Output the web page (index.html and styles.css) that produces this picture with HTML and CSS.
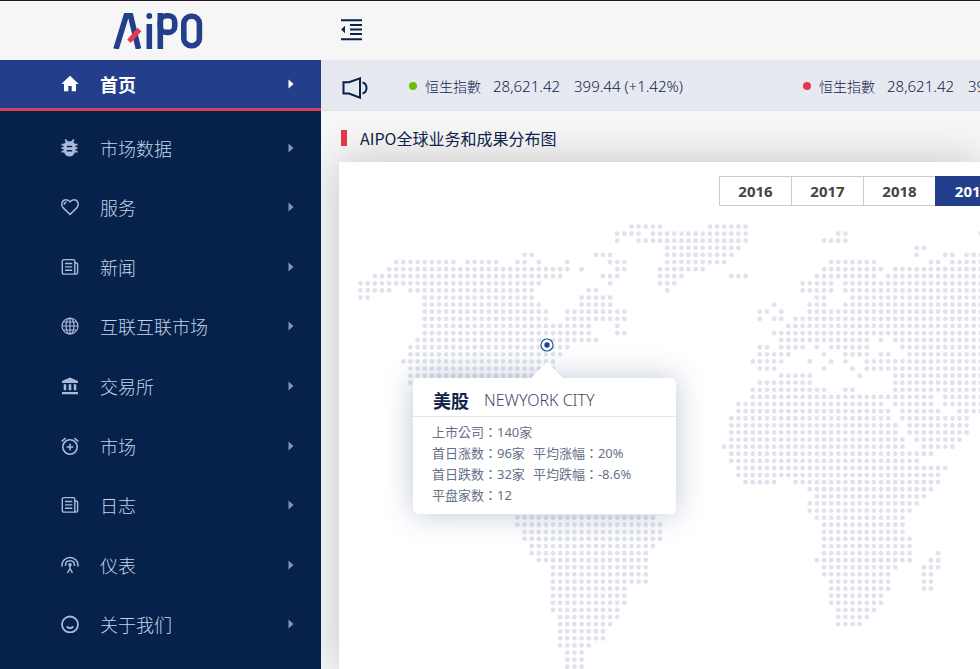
FILE: index.html
```html
<!DOCTYPE html>
<html lang="zh-CN">
<head>
<meta charset="utf-8">
<title>AIPO</title>
<link rel="stylesheet" href="styles.css">
</head>
<body>
<svg class="sprite" aria-hidden="true">
  <symbol id="news" viewBox="0 0 18 18">
    <path d="M3 1.600h9.400q1.400 0 1.400 1.400v11.600q0 1.500 1.300 1.500H3q-1.700 0-1.700-1.700V3q0-1.400 1.700-1.400zM13.800 5h1.200q1.600 0 1.600 1.500v8.200q0 1.400-1.500 1.400M4 5.500h7.300M4 8.900h7.300M4 12.300h7.300" fill="none" stroke="currentColor" stroke-width="1.400"/>
  </symbol>
  <symbol id="caret" viewBox="0 0 6 10"><path d="M.5.5 5.500 5 .5 9.500z" fill="currentColor"/></symbol>
</svg>
<div class="shell">
  <header class="topbar">
    <a class="brand" href="#" aria-label="AIPO">
      <svg class="logo" viewBox="0 0 90 36">
        <g fill="none" stroke="#233f8c" stroke-width="5.600">
          <polyline points="3,36 13.200,2.800 17.600,2.800 25.500,36"/>
          <line x1="36.300" y1="11" x2="36.300" y2="36"/>
          <line x1="47.300" y1="0" x2="47.300" y2="36"/>
          <rect x="47.300" y="2.800" width="14.400" height="16.600" rx="6"/>
          <rect x="70.800" y="3.300" width="15.600" height="29.400" rx="7.200"/>
        </g>
        <circle cx="36.300" cy="3" r="2.900" fill="#233f8c"/>
        <line x1="16" y1="28.300" x2="26.500" y2="16.500" stroke="#e23b4b" stroke-width="5"/>
      </svg>
    </a>
    <button class="toggle" type="button" aria-label="收起菜单">
      <svg viewBox="0 0 22 22"><path d="M0 1.200h21M9 6h12M9 10.500h12M9 15h12M0 20.300h21" stroke="currentColor" stroke-width="1.900"/><path d="M4 6.800v7.400L.2 10.500z" fill="currentColor"/></svg>
    </button>
  </header>
  <div class="body">
    <nav class="sidebar">
      <a class="item active" href="#"><svg class="icon" viewBox="0 0 18 18"><path d="M9 .7 17.700 9H15v7.300h-4.300v-5.200H7.300v5.200H3V9H.3z" fill="currentColor"/></svg><span class="name">首页</span><svg class="caret"><use href="#caret"/></svg></a>
      <div class="menu">
        <a class="item" href="#"><svg class="icon" viewBox="0 0 18 18"><path d="M3.500.8 5 0l1.500 2.300h4L12 0l1.500.8-1.300 2.400 1.800 1.600H16.500v1.700H14.500V8.200H16.500V10H14.500v1.700H16.500v1.800H13.800Q12.500 17.400 8.500 17.400T3.200 13.500H.5v-1.800H2.500V10H.5V8.200H2.500V6.500H.5V4.800H3l1.800-1.600zM5.800 6.700v1.500h5.400V6.700zM5.800 11v1.500h5.400V11z" fill="currentColor" fill-rule="evenodd"/></svg><span class="name">市场数据</span><svg class="caret"><use href="#caret"/></svg></a>
        <a class="item" href="#"><svg class="icon" viewBox="0 0 18 18"><path d="M9 16.500 2 9.600C-.5 6.500 1.300 1.700 5 1.700c1.800 0 3 .8 4 2.200 1-1.400 2.200-2.200 4-2.200 3.700 0 5.500 4.800 3 7.900zM3.200 6.800Q3.300 4.300 5.500 4.200" fill="none" stroke="currentColor" stroke-width="1.500" stroke-linejoin="round"/></svg><span class="name">服务</span><svg class="caret"><use href="#caret"/></svg></a>
        <a class="item" href="#"><svg class="icon"><use href="#news"/></svg><span class="name">新闻</span><svg class="caret"><use href="#caret"/></svg></a>
        <a class="item" href="#"><svg class="icon" viewBox="0 0 18 18"><g fill="none" stroke="currentColor" stroke-width="1.200"><circle cx="9" cy="9" r="8"/><ellipse cx="9" cy="9" rx="4" ry="8"/><path d="M9 1v16M1 9h16M2.200 5h13.600M2.200 13h13.600"/></g></svg><span class="name">互联互联市场</span><svg class="caret"><use href="#caret"/></svg></a>
        <a class="item" href="#"><svg class="icon" viewBox="0 0 18 18"><path d="M9 .5 17 4v2H1V4zM2.700 7.300h2.500v6H2.700zM7.700 7.300h2.600v6H7.700zM12.800 7.300h2.500v6h-2.500zM1 15h16v2.200H1z" fill="currentColor"/></svg><span class="name">交易所</span><svg class="caret"><use href="#caret"/></svg></a>
        <a class="item" href="#"><svg class="icon" viewBox="0 0 18 18"><g fill="none" stroke="currentColor" stroke-width="1.600"><circle cx="9" cy="10" r="7.200"/><path d="M9 6.700v6.600M5.700 10h6.600M.7 4.400 4.700 1M17.300 4.400 13.300 1"/></g></svg><span class="name">市场</span><svg class="caret"><use href="#caret"/></svg></a>
        <a class="item" href="#"><svg class="icon"><use href="#news"/></svg><span class="name">日志</span><svg class="caret"><use href="#caret"/></svg></a>
        <a class="item" href="#"><svg class="icon" viewBox="0 0 18 18"><g fill="none" stroke="currentColor" stroke-width="1.500"><path d="M1.200 10.500Q.5 6.500 3 4 5.600 1.500 9 1.500T15 4Q17.500 6.500 16.800 10.500M4.500 10Q4.200 4.800 9 4.700T13.500 10M9 9v4.500M9 12.500 6.500 17M9 12.500 11.500 17"/></g><circle cx="9" cy="8.800" r="1.800" fill="currentColor"/></svg><span class="name">仪表</span><svg class="caret"><use href="#caret"/></svg></a>
        <a class="item" href="#"><svg class="icon" viewBox="0 0 18 18"><g fill="none" stroke="currentColor" stroke-width="1.800"><circle cx="9" cy="9.500" r="8"/><path d="M5.800 11.500Q9 14.800 12.200 11.500"/></g></svg><span class="name">关于我们</span><svg class="caret"><use href="#caret"/></svg></a>
      </div>
    </nav>
    <main class="main">
      <div class="ticker">
        <svg class="speaker" viewBox="0 0 26 22"><g fill="none" stroke="currentColor" stroke-width="2"><path d="M1.500 5.200H7L18 1.300V20.700L7 16.500H1.500z"/><path d="M20.500 5.500Q24.500 6.500 24.500 11T20.500 16.500"/></g></svg>
        <div class="quote"><i class="dot up"></i><span class="index" lang="zh-TW">恒生指數</span><span class="price">28,621.42</span><span>399.44 (+1.42%)</span></div>
        <div class="quote"><i class="dot down"></i><span class="index" lang="zh-TW">恒生指數</span><span class="price">28,621.42</span><span>399.44 (+1.42%)</span></div>
      </div>
      <h1 class="title">AIPO全球业务和成果分布图</h1>
      <section class="panel">
        <div class="years">
          <button type="button">2016</button><button type="button">2017</button><button type="button">2018</button><button type="button" class="selected">2019</button>
        </div>
        <div class="map">
          <svg class="world" viewBox="0 0 100 70" preserveAspectRatio="none" aria-hidden="true"><path id="land"/></svg>
          <svg class="pin" viewBox="0 0 14 14"><circle cx="7" cy="7" r="6" fill="#fff" stroke="#255c98" stroke-width="1.200"/><circle cx="7" cy="7" r="2.700" fill="#233f8c"/></svg>
          <article class="popup">
            <h2 class="popup-head"><b>美股</b><span>NEWYORK CITY</span></h2>
            <div class="facts" lang="zh-TW">
              <p><span>上市公司：140家</span></p>
              <p><span>首日涨数：96家</span><span>平均涨幅：20%</span></p>
              <p><span>首日跌数：32家</span><span>平均跌幅：-8.6%</span></p>
              <p><span>平盘家数：12</span></p>
            </div>
          </article>
        </div>
      </section>
    </main>
  </div>
</div>
<script src="map.js"></script>
</body>
</html>
```
FILE: styles.css
```css
* { box-sizing: border-box; }
body {
  margin: 0;
  font-family: "Noto Sans", "Noto Sans CJK SC", sans-serif;
  color: #10244c;
}
h1, h2, p { margin: 0; font-weight: 400; }
a { color: inherit; text-decoration: none; }
button { font: inherit; color: inherit; background: none; border: 0; padding: 0; }
svg { display: block; flex: none; }
.sprite { position: absolute; width: 0; height: 0; }

.shell {
  height: 100vh;
  min-height: 600px;
  display: flex;
  flex-direction: column;
  overflow: hidden;
  background: #f6f6f6;
}
.topbar {
  flex: none;
  display: flex;
  align-items: center;
  height: 60px;
  padding-bottom: 2px;
  border-top: 1px solid #1c1a20;
}
.brand { width: 321px; padding: 2px 0 0 113px; }
.logo { width: 90px; height: 36px; }
.toggle { margin-left: 20px; color: #0a2148; }
.toggle svg { width: 22px; height: 22px; }

.body { flex: 1; display: flex; min-height: 0; }

.sidebar {
  flex: none;
  width: 321px;
  display: flex;
  flex-direction: column;
  background: #07224a;
  color: #c6d2e8;
}
.menu { flex: 1; display: flex; flex-direction: column; padding: 7px 0 15px; }
.item {
  flex: 1;
  display: flex;
  align-items: center;
  padding: 0 27px 0 61px;
  font-family: "Noto Sans CJK SC", sans-serif;
  font-size: 18px;
  font-weight: 300;
}
.item.active {
  flex: none;
  height: 51px;
  background: #233f8c;
  border-bottom: 3px solid #d8405a;
  color: #fff;
  font-weight: 700;
}
.icon { width: 18px; height: 18px; margin-right: 21px; color: #a9bada; }
.active .icon, .active .caret { color: #fff; }
.name { flex: 1; }
.caret { width: 6px; height: 10px; color: #8495b5; }

.main { flex: 1; min-width: 0; display: flex; flex-direction: column; overflow: hidden; }
.ticker {
  flex: none;
  display: flex;
  align-items: center;
  height: 51px;
  padding: 2px 0 0 21px;
  background: #e7e9f1;
  border-bottom: 1px solid #dfe0e6;
  font-size: 15px;
  font-weight: 300;
  white-space: nowrap;
}
.speaker { width: 26px; height: 22px; margin: 4px 41px 0 0; color: #0a2148; }
.quote { flex: none; display: flex; align-items: center; width: 394px; }
.dot { width: 8px; height: 8px; border-radius: 50%; margin-right: 8px; }
.up { background: #6abf0b; }
.down { background: #e23b4b; }
.index { font-family: "Noto Sans CJK TC", sans-serif; font-size: 14px; margin-right: 12px; }
.price { margin-right: 14px; }

.title {
  flex: none;
  display: flex;
  align-items: center;
  height: 51px;
  padding: 3px 0 0 20px;
  font-family: "Noto Sans CJK SC", sans-serif;
  font-size: 16px;
}
.title::before { content: ""; width: 6px; height: 16px; margin-right: 13px; background: #e23b4b; }

.panel {
  flex: 1;
  min-height: 0;
  margin-left: 18px;
  padding-top: 14px;
  background: #fff;
  box-shadow: 0 0 40px rgba(0, 0, 0, 0.2);
}
.years { display: flex; height: 30px; margin: 0 0 17px 380px; }
.years button {
  flex: none;
  width: 73px;
  margin-right: -1px;
  border: 1px solid #ccc;
  color: #444;
  font-size: 15px;
  font-weight: 700;
}
.years .selected { width: 74px; background: #233f8c; border-color: #233f8c; color: #fff; }

.map { position: relative; margin-left: 18px; }
.world { width: 713px; height: 497px; }
.world path {
  fill: none;
  stroke: #e0e3ed;
  stroke-width: 0.68;
  stroke-linecap: round;
  stroke-dasharray: 0 1;
}
.pin { position: absolute; left: 183px; top: 115px; width: 14px; height: 14px; }
.popup {
  position: absolute;
  left: 56px;
  top: 155px;
  width: 263px;
  padding-bottom: 8px;
  background: #fff;
  border-radius: 5px;
  box-shadow: 0 0 30px rgba(40, 70, 120, 0.3);
}
.popup::before {
  content: "";
  position: absolute;
  left: 118px;
  top: -16px;
  border: 16px solid transparent;
  border-top: 0;
  border-bottom-color: #fff;
}
.popup-head {
  display: flex;
  align-items: center;
  height: 39px;
  padding: 6px 0 0 20px;
  border-bottom: 1px solid #e3e5ea;
  font-size: 16px;
  font-weight: 300;
}
.popup-head b { margin-right: 15px; font-family: "Noto Sans CJK SC", sans-serif; font-size: 18px; font-weight: 700; }
.popup-head span { color: #3a4966; }
.facts {
  padding: 5px 0 0 19px;
  font-family: "Noto Sans", "Noto Sans CJK TC", sans-serif;
  font-size: 13px;
  font-weight: 300;
  line-height: 21px;
  color: #667087;
}
.facts p { display: flex; gap: 8px; }
```
FILE: map.js
```js
// Each row lists the runs of land cells as "first-last" columns.
const rows = [
  "38-42 49-54", "36-39 41-54 67-68 87", "36 39-54 65-68", "43-53 78-79",
  "23-24 33-35 43-52 78 82-83 85-87", "5-13 15-19 22-23 25 29 35-37 43-51 66-72 80-81 83-87",
  "4-29 31 36-37 42-48 65-73 75-87", "2-28 34-36 42-45 52-54 64-72 74-87",
  "0-25 35 42-44 62-66 68-87", "0-4 7-24 32-33 43 62-66 68-87",
  "0-1 9-24 31-35 64-65 69-87", "9-25 31-35 58 63-65 68-87",
  "9-26 29-37 56-57 59 63-87", "9-26 29-37 56 58-59 61-87",
  "9-32 36 60-87", "9-32 36-37 58-87", "8-33 59-71 73 75-87",
  "7-29 56-57 59-62 64 66-71 76-87", "7-28 56-60 65 68-71 73-74 77-87",
  "6-27 55-59 63 66 68 71-87", "7-27 56-58 65 69 71-87", "7-27 59-63 70 75-87",
  "7-27 56-63 75-87", "55-65 68-69 75-87", "55-74 75-80 82-87", "53-73 75-80 82-87",
  "53-74 76-81 84-87", "52-74 76-85", "52-75 77-85", "52-75 77-85", "52-76 78-84",
  "51-76 79-83", "52-80", "52-78", "53-82", "53-81", "54-58 61-81", "63-80", "64-79",
  "63-78", "63-77", "22-41 64-76", "22-42 65-76", "23-42 65-76", "23-42 65-77",
  "24-41 65-77", "24-40 65-77 81", "25-40 64-77 80-81", "27-40 65-75 79-81",
  "27-40 65-74 79-80", "27-40 66-74 79-80", "27-37 66-74 79-80", "27-37 66-73",
  "27-37 66-73", "27-36 67-72", "28-36 67-71", "28-35 67-70", "28-34", "28-34",
  "28-32", "29-31", "29-31", "29-31"
];
const d = rows.map((row, y) => row.split(" ").map(run => {
  const [a, b = a] = run.split("-").map(Number);
  return `M${a + 0.5} ${y + 0.5}h${b - a + 0.1}`;
}).join("")).join("");
document.getElementById("land").setAttribute("d", d);
```
